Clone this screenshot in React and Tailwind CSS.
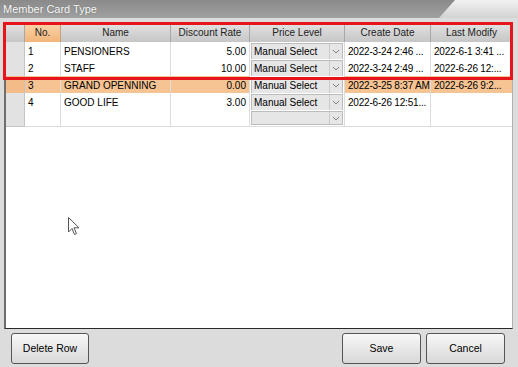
import React from "react";

// dates are shown the way the grid shows them, already cut with "..."
const rows = [
  { no: "1", name: "PENSIONERS", rate: "5.00", level: "Manual Select", created: "2022-3-24 2:46 ...", modified: "2022-6-1 3:41 ..." },
  { no: "2", name: "STAFF", rate: "10.00", level: "Manual Select", created: "2022-3-24 2:49 ...", modified: "2022-6-26 12:..." },
  { no: "3", name: "GRAND OPENNING", rate: "0.00", level: "Manual Select", created: "2022-3-25 8:37 AM", modified: "2022-6-26 9:2...", selected: true },
  { no: "4", name: "GOOD LIFE", rate: "3.00", level: "Manual Select", created: "2022-6-26 12:51...", modified: "" },
  { no: "", name: "", rate: "", level: "", created: "", modified: "" },
];

const Combo = ({ value }) => (
  <div className="flex h-full w-full items-center border border-[#bcbcbc] bg-[#e6e6e6]">
    <span className="flex-1 overflow-hidden whitespace-nowrap pl-[2px]">{value}</span>
    <span className="flex h-full w-[13px] items-center justify-center border-l border-[#cacaca]">
      <svg width="8" height="5" viewBox="0 0 8 5">
        <path d="M1 1 L4 4 L7 1" fill="none" stroke="#808080" strokeWidth="1" />
      </svg>
    </span>
  </div>
);

const App = () => {
  const head = "flex items-center justify-center border-r border-[#a8a8a8] bg-gradient-to-b from-[#e4e4e4] to-[#c6c6c6]";
  const cell = "flex items-center border-r border-b border-[#dcdcdc] px-[3px] min-w-0 overflow-hidden whitespace-nowrap";

  return (
    <div
      className="relative h-[367px] w-[518px] overflow-hidden bg-[#dcdcdc] text-[10px] text-black"
      style={{ fontFamily: '"Liberation Sans", Arial, sans-serif' }}
    >
      {/* title bar */}
      <div className="flex h-[18px] bg-gradient-to-b from-[#f2f2f2] to-[#d2d2d2]">
        <div className="flex w-[455px] items-center bg-gradient-to-b from-[#8a8a8a] to-[#a0a0a0] pl-[3px] text-[11px] text-white [clip-path:polygon(0_0,100%_0,calc(100%-16px)_100%,0_100%)] [text-shadow:0_0_1px_#555]">
          Member Card Type
        </div>
      </div>

      {/* grid panel */}
      <div className="mt-[4px] ml-[4px] flex h-[307px] w-[509px] flex-col border-l-2 border-b border-r border-l-[#6e6e6e] border-b-[#2a2a2a] border-r-[#b0b0b0] bg-white">
        <div className="grid h-[20px] grid-cols-[19px_36px_110px_79px_95px_86px_1fr] text-[#222]">
          <div className={head} />
          <div className="flex items-center justify-center border-r border-[#c8a07a] bg-gradient-to-b from-[#fbd6ac] to-[#f2b57a]">No.</div>
          <div className={head}>Name</div>
          <div className={head}>Discount Rate</div>
          <div className={head}>Price Level</div>
          <div className={head}>Create Date</div>
          <div className={head + " border-r-0"}>Last Modify</div>
        </div>
        {rows.map((r, i) => {
          const bg = r.selected ? "bg-[#f6c393]" : "bg-white";
          return (
            <div key={i} className="grid h-[17px] grid-cols-[19px_36px_110px_79px_95px_86px_1fr]">
              <div className={`border-r border-b border-[#c4c4c4] ${r.selected ? "bg-[#f3bb88]" : "bg-[#e2e2e2]"}`} />
              <div className={`${cell} ${bg}`}>{r.no}</div>
              <div className={`${cell} ${bg}`}>{r.name}</div>
              <div className={`${cell} ${bg} justify-end`}>{r.rate}</div>
              <div className="border-r border-b border-[#dcdcdc] bg-white p-[1px]">
                <Combo value={r.level} />
              </div>
              <div className={`${cell} ${bg} tracking-[-0.2px]`}>{r.created}</div>
              <div className={`${cell} ${bg} border-r-0 tracking-[-0.2px]`}>{r.modified}</div>
            </div>
          );
        })}
        <div className="flex-1" />
      </div>

      {/* buttons */}
      <div className="flex items-center px-[11px] pt-[4px]">
        <button className="h-[31px] w-[78px] rounded-[3px] border border-[#555] bg-gradient-to-b from-[#f8f8f8] to-[#d8d8d8] text-[10.5px]">
          Delete Row
        </button>
        <div className="flex-1" />
        <button className="h-[31px] w-[79px] rounded-[3px] border border-[#555] bg-gradient-to-b from-[#f8f8f8] to-[#d8d8d8] text-[10.5px]">
          Save
        </button>
        <button className="ml-[5px] mr-[2px] h-[31px] w-[79px] rounded-[3px] border border-[#555] bg-gradient-to-b from-[#f8f8f8] to-[#d8d8d8] text-[10.5px]">
          Cancel
        </button>
      </div>

      {/* highlight rectangle */}
      <div className="pointer-events-none absolute top-[22px] left-[3px] h-[58px] w-[510px] border-[3px] border-[#e8141c]" />

      {/* mouse cursor */}
      <svg className="absolute top-[217px] left-[68px]" width="13" height="20" viewBox="0 0 13 20">
        <path d="M0.5 0.5 L0.5 15 L4 11.5 L6.5 17.5 L8.5 16.5 L6 10.8 L11 10.8 Z" fill="white" stroke="#555" strokeWidth="1" strokeLinejoin="round" />
      </svg>
    </div>
  );
};

export default App;
